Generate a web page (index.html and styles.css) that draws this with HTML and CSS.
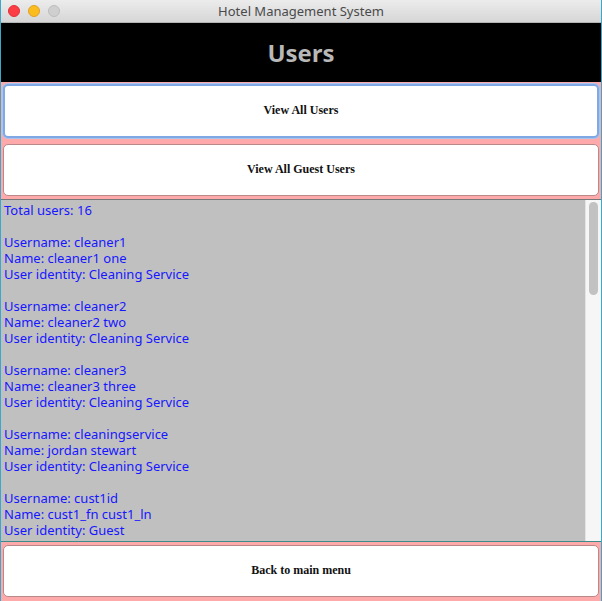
FILE: index.html
```html
<!DOCTYPE html>
<html>
<head>
<meta charset="utf-8">
<link rel="stylesheet" href="styles.css">
</head>
<body>
<div class="window">
  <div class="titlebar">
    <div class="lights">
      <span class="light red"></span>
      <span class="light yellow"></span>
      <span class="light gray"></span>
    </div>
    <div class="title">Hotel Management System</div>
  </div>
  <div class="header">Users</div>
  <div class="panel top-panel">
    <button class="btn focused">View All Users</button>
    <button class="btn">View All Guest Users</button>
  </div>
  <div class="textarea">
    <div class="text">Total users: 16

Username: cleaner1
Name: cleaner1 one
User identity: Cleaning Service

Username: cleaner2
Name: cleaner2 two
User identity: Cleaning Service

Username: cleaner3
Name: cleaner3 three
User identity: Cleaning Service

Username: cleaningservice
Name: jordan stewart
User identity: Cleaning Service

Username: cust1id
Name: cust1_fn cust1_ln
User identity: Guest</div>
    <div class="scrollbar"><div class="thumb"></div></div>
  </div>
  <div class="panel bottom-panel">
    <button class="btn">Back to main menu</button>
  </div>
</div>
</body>
</html>
```

FILE: styles.css
```css
* { box-sizing: border-box; }
html, body { margin: 0; padding: 0; }
body { width: 602px; height: 601px; overflow: hidden; background: #ffaaaa; }
.window {
  width: 602px; height: 601px;
  display: flex; flex-direction: column;
  border-left: 1px solid #3aa8cc;
  border-right: 1px solid #3aa8cc;
}
.titlebar {
  height: 23px; flex: none;
  position: relative;
  background: linear-gradient(#ececec, #d6d6d6);
  border-bottom: 1px solid #b4b4b4;
  display: flex; align-items: center; justify-content: center;
}
.lights { position: absolute; left: 7px; top: 5px; display: flex; gap: 8px; }
.light { width: 12px; height: 12px; border-radius: 50%; display: block; }
.light.red { background: #fc3d45; border: 1px solid #e0313a; }
.light.yellow { background: #fdbc1e; border: 1px solid #dfa123; }
.light.gray { background: #cfcfcf; border: 1px solid #bdbdbd; }
.title { font-family: "Noto Sans", "DejaVu Sans", sans-serif; font-size: 13px; color: #4a4a4a; }
.header {
  height: 59px; flex: none;
  background: #000;
  color: #b8b8b8;
  font-family: "Open Sans", sans-serif; font-weight: 700; font-size: 24px;
  display: flex; align-items: center; justify-content: center;
}
.panel { background: #ffaaaa; display: flex; flex-direction: column; }
.top-panel { height: 118px; flex: none; padding: 2px 2px 3px 2px; gap: 6px; border-bottom: 1px solid #777; }
.btn {
  flex: 1;
  background: #fff;
  border: 1px solid #b98888;
  border-radius: 5px;
  font-family: "Liberation Serif", serif; font-weight: 700; font-size: 12px;
  color: #111;
  padding: 0 0 2px 0;
}
.btn.focused { border: 2px solid #7fa8e4; box-shadow: 0 0 0 1px #a9c4ef; }
.textarea {
  flex: 1; min-height: 0;
  background: #c0c0c0;
  display: flex;
  border-bottom: 1px solid #3e8a88;
}
.text {
  flex: 1;
  white-space: pre;
  font-family: "Noto Sans", "DejaVu Sans", sans-serif; font-size: 13px; line-height: 16px;
  color: #1717ff;
  padding: 2px 0 0 3px;
  overflow: hidden;
}
.scrollbar {
  width: 16px; flex: none;
  background: #f6f6f6;
  border-left: 1px solid #e4e4e4;
  padding: 2px 3px 0 3px;
}
.thumb { height: 93px; background: #c2c2c2; border-radius: 5px; }
.bottom-panel { flex: none; height: 59px; padding: 3px 2px 4px 2px; }
```
